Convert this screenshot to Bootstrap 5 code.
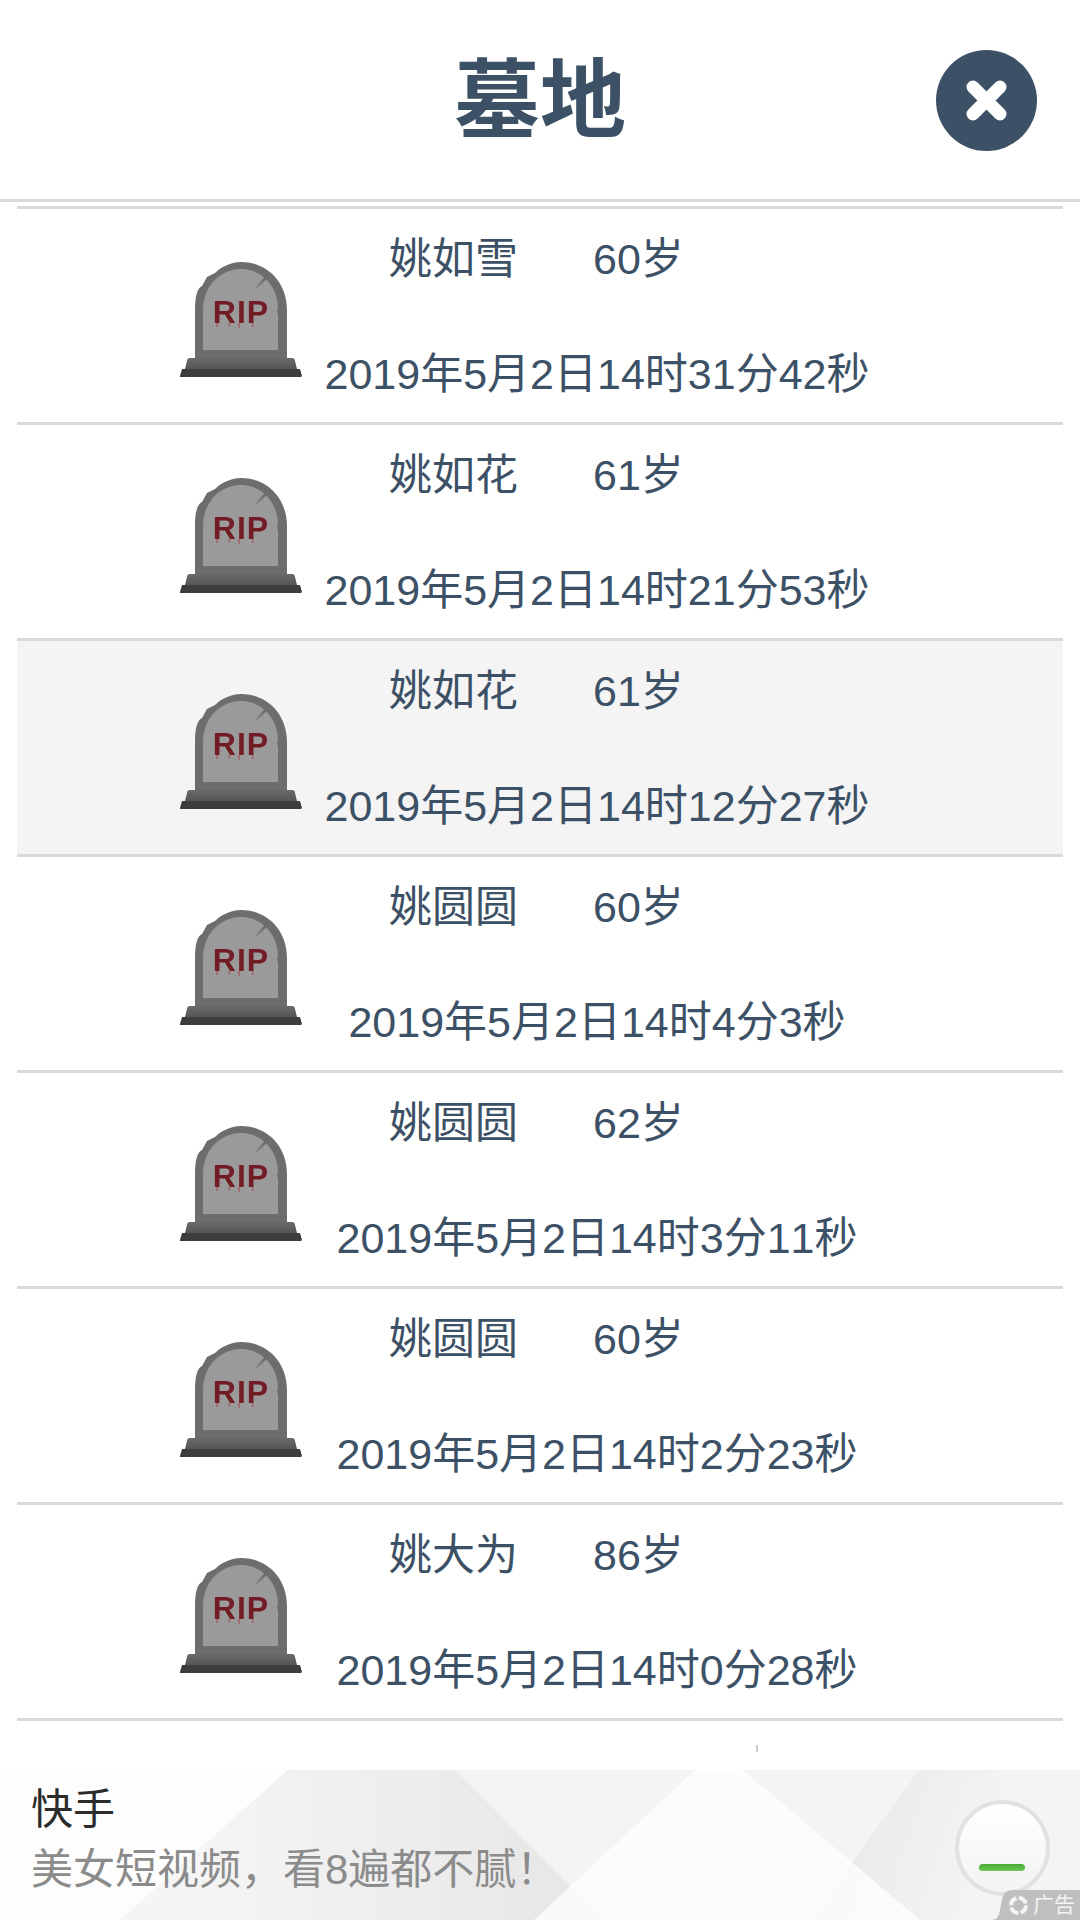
<!doctype html>
<html lang="zh-CN">
<head>
    <meta charset="utf-8">
    <meta name="viewport" content="width=device-width, initial-scale=1">
    <title>墓地</title>
    <link href="https://cdn.jsdelivr.net/npm/bootstrap@5.3.3/dist/css/bootstrap.min.css" rel="stylesheet">
    <style>
        body {
            font-family: "Liberation Sans", "Noto Sans CJK SC", sans-serif;
            font-kerning: none;
            color: #3d5166;
            background: #fff;
            overflow: hidden;
        }
        .page-head {
            height: 202px;
            border-bottom: 3px solid #d9d8dd;
        }
        .page-title {
            font-size: 86px;
            font-weight: 700;
            line-height: 1;
            margin: 2px 0 0;
            color: #3d5166;
        }
        .close-btn {
            right: 43px;
            top: 50px;
            width: 101px;
            height: 101px;
            border: 0;
            border-radius: 50%;
            background: #3d5166;
            filter: blur(.6px);
        }
        .grave-list { margin: 4px 17px 0; }
        .grave-row {
            height: 216px;
            border-top: 3px solid #d9d8dd;
        }
        .grave-row:last-child {
            height: 219px;
            border-bottom: 3px solid #d9d8dd;
        }
        .grave-row.is-new { background: #f4f4f4; }
        .stone-col {
            width: 285px;
            padding: 53px 0 0 163px;
        }
        .stone-icon { width: 122px; height: 116px; filter: blur(.6px); }
        .info-col {
            width: 590px;
            padding: 21px 0 19px;
            font-size: 43px;
            line-height: 58px;
        }
        .name-line { padding-left: 87px; }
        .age-text { margin-left: 75px; }
        .speck { width: 2px; height: 7px; background: #c9c9c9; margin: 24px 0 0 756px; }
        .ad-bar {
            height: 150px;
            background: #f4f4f4;
            overflow: hidden;
        }
        .ad-bg { left: 0; top: 0; }
        .ad-text { left: 31px; top: 15px; }
        .ad-name { font-size: 42px; line-height: 50px; color: #2b2b2b; }
        .ad-desc { font-size: 42px; line-height: 50px; color: #8b8b8b; margin-top: 10px; }
        .ad-open {
            left: 955px;
            top: 30px;
            width: 95px;
            height: 96px;
            border-radius: 50%;
            border: 4px solid #e1e1e1;
            background: linear-gradient(#fff, #f3f3f3);
        }
        .ad-dash {
            left: 20px;
            top: 60px;
            width: 46px;
            height: 7px;
            border-radius: 4px;
            background: linear-gradient(#4aa936, #6cc955);
        }
        .ad-tag {
            right: 0;
            bottom: 0;
            width: 89px;
            height: 30px;
            background: #bfbfbf;
            clip-path: path("M0 30Q8 30 9 20L11 9Q13 0 22 0H89V30z");
            color: #f4f4f4;
            font-size: 21px;
            line-height: 30px;
            padding-left: 17px;
        }
    </style>
</head>
<body>
    <svg width="0" height="0" class="position-absolute">
        <defs>
            <linearGradient id="stepFill" x1="0" y1="0" x2="0" y2="1">
                <stop offset="0" stop-color="#6a6a6a"/>
                <stop offset="1" stop-color="#555"/>
            </linearGradient>
            <symbol id="tomb" viewBox="0 0 122 116">
                <path d="M15 97V48C15 32 18 26 22 24l5-9 8-4C42 4 52 0 61 0c26 0 46 20 46 48v49z" fill="#6d6d6d"/>
                <path d="M23 88V48C23 24 40 7 61 7s37 17 37 41v40z" fill="#9a9a9a"/>
                <path d="M86 13L75 27l13-11z" fill="#6d6d6d"/>
                <path d="M23 46l-4 2 4 2zM98 46l-1 4 1 3z" fill="#6d6d6d"/>
                <path d="M7 99q0-3 3-3h102q3 0 3 3l2 8H5z" fill="url(#stepFill)"/>
                <path d="M2 107h118l2 7-1 1H0v-1z" fill="#3c3c3c"/>
                <text x="61" y="61" text-anchor="middle" font-family="Liberation Sans, sans-serif" font-weight="700" font-size="32" letter-spacing="1" fill="#741c25">RIP</text>
                <path d="M37 61v4M49 61v3M59 61v5M73 61v4" stroke="#a5606c" stroke-width="1.5"/>
            </symbol>
        </defs>
    </svg>

    <div class="d-flex flex-column vh-100">
        <header class="page-head position-relative d-flex justify-content-center align-items-center">
            <h1 class="page-title">墓地</h1>
            <button type="button" class="close-btn position-absolute p-0" aria-label="关闭">
                <svg class="d-block" width="101" height="101" viewBox="0 0 101 101"><path d="M37 37l27 27M64 37L37 64" stroke="#fff" stroke-width="13" stroke-linecap="round"/></svg>
            </button>
        </header>

        <ul class="grave-list list-unstyled">
            <li class="grave-row d-flex">
                <div class="stone-col"><svg class="stone-icon d-block"><use href="#tomb"/></svg></div>
                <div class="info-col d-flex flex-column justify-content-between text-center">
                    <div class="name-line d-flex"><span>姚如雪</span><span class="age-text">60岁</span></div>
                    <div>2019年5月2日14时31分42秒</div>
                </div>
            </li>
            <li class="grave-row d-flex">
                <div class="stone-col"><svg class="stone-icon d-block"><use href="#tomb"/></svg></div>
                <div class="info-col d-flex flex-column justify-content-between text-center">
                    <div class="name-line d-flex"><span>姚如花</span><span class="age-text">61岁</span></div>
                    <div>2019年5月2日14时21分53秒</div>
                </div>
            </li>
            <li class="grave-row is-new d-flex">
                <div class="stone-col"><svg class="stone-icon d-block"><use href="#tomb"/></svg></div>
                <div class="info-col d-flex flex-column justify-content-between text-center">
                    <div class="name-line d-flex"><span>姚如花</span><span class="age-text">61岁</span></div>
                    <div>2019年5月2日14时12分27秒</div>
                </div>
            </li>
            <li class="grave-row d-flex">
                <div class="stone-col"><svg class="stone-icon d-block"><use href="#tomb"/></svg></div>
                <div class="info-col d-flex flex-column justify-content-between text-center">
                    <div class="name-line d-flex"><span>姚圆圆</span><span class="age-text">60岁</span></div>
                    <div>2019年5月2日14时4分3秒</div>
                </div>
            </li>
            <li class="grave-row d-flex">
                <div class="stone-col"><svg class="stone-icon d-block"><use href="#tomb"/></svg></div>
                <div class="info-col d-flex flex-column justify-content-between text-center">
                    <div class="name-line d-flex"><span>姚圆圆</span><span class="age-text">62岁</span></div>
                    <div>2019年5月2日14时3分11秒</div>
                </div>
            </li>
            <li class="grave-row d-flex">
                <div class="stone-col"><svg class="stone-icon d-block"><use href="#tomb"/></svg></div>
                <div class="info-col d-flex flex-column justify-content-between text-center">
                    <div class="name-line d-flex"><span>姚圆圆</span><span class="age-text">60岁</span></div>
                    <div>2019年5月2日14时2分23秒</div>
                </div>
            </li>
            <li class="grave-row d-flex">
                <div class="stone-col"><svg class="stone-icon d-block"><use href="#tomb"/></svg></div>
                <div class="info-col d-flex flex-column justify-content-between text-center">
                    <div class="name-line d-flex"><span>姚大为</span><span class="age-text">86岁</span></div>
                    <div>2019年5月2日14时0分28秒</div>
                </div>
            </li>
        </ul>
        <div class="speck"></div>

        <!-- ad banner -->
        <aside class="ad-bar position-relative mt-auto">
            <svg class="ad-bg position-absolute" width="1080" height="150" viewBox="0 0 1080 150">
                <defs>
                    <linearGradient id="adA" gradientUnits="userSpaceOnUse" x1="200" y1="0" x2="540" y2="0">
                        <stop offset="0" stop-color="#f5f5f5"/>
                        <stop offset="1" stop-color="#e8e8e8"/>
                    </linearGradient>
                    <linearGradient id="adB" gradientUnits="userSpaceOnUse" x1="860" y1="60" x2="985" y2="105">
                        <stop offset="0" stop-color="#ebebeb"/>
                        <stop offset="1" stop-color="#f4f4f4"/>
                    </linearGradient>
                </defs>
                <path d="M0 0H288L120 150H0z" fill="#fdfdfd"/>
                <path d="M288 0H455L605 150H120z" fill="url(#adA)"/>
                <path d="M919 0H1080V150H810z" fill="url(#adB)"/>
                <path d="M695 0H743L920 150H534z" fill="#fff" fill-opacity=".75"/>
            </svg>
            <div class="ad-text position-absolute">
                <div class="ad-name">快手</div>
                <div class="ad-desc">美女短视频，看8遍都不腻！</div>
            </div>
            <div class="ad-open position-absolute">
                <div class="ad-dash position-absolute"></div>
            </div>
            <div class="ad-tag position-absolute d-flex align-items-center gap-1">
                <svg width="21" height="21" viewBox="0 0 21 21"><circle cx="10.5" cy="10.5" r="7.5" fill="none" stroke="#f4f4f4" stroke-width="4" stroke-dasharray="9.5 2.3"/></svg>
                <span>广告</span>
            </div>
        </aside>
    </div>

    <script src="https://cdn.jsdelivr.net/npm/bootstrap@5.3.3/dist/js/bootstrap.bundle.min.js"></script>
</body>
</html>
